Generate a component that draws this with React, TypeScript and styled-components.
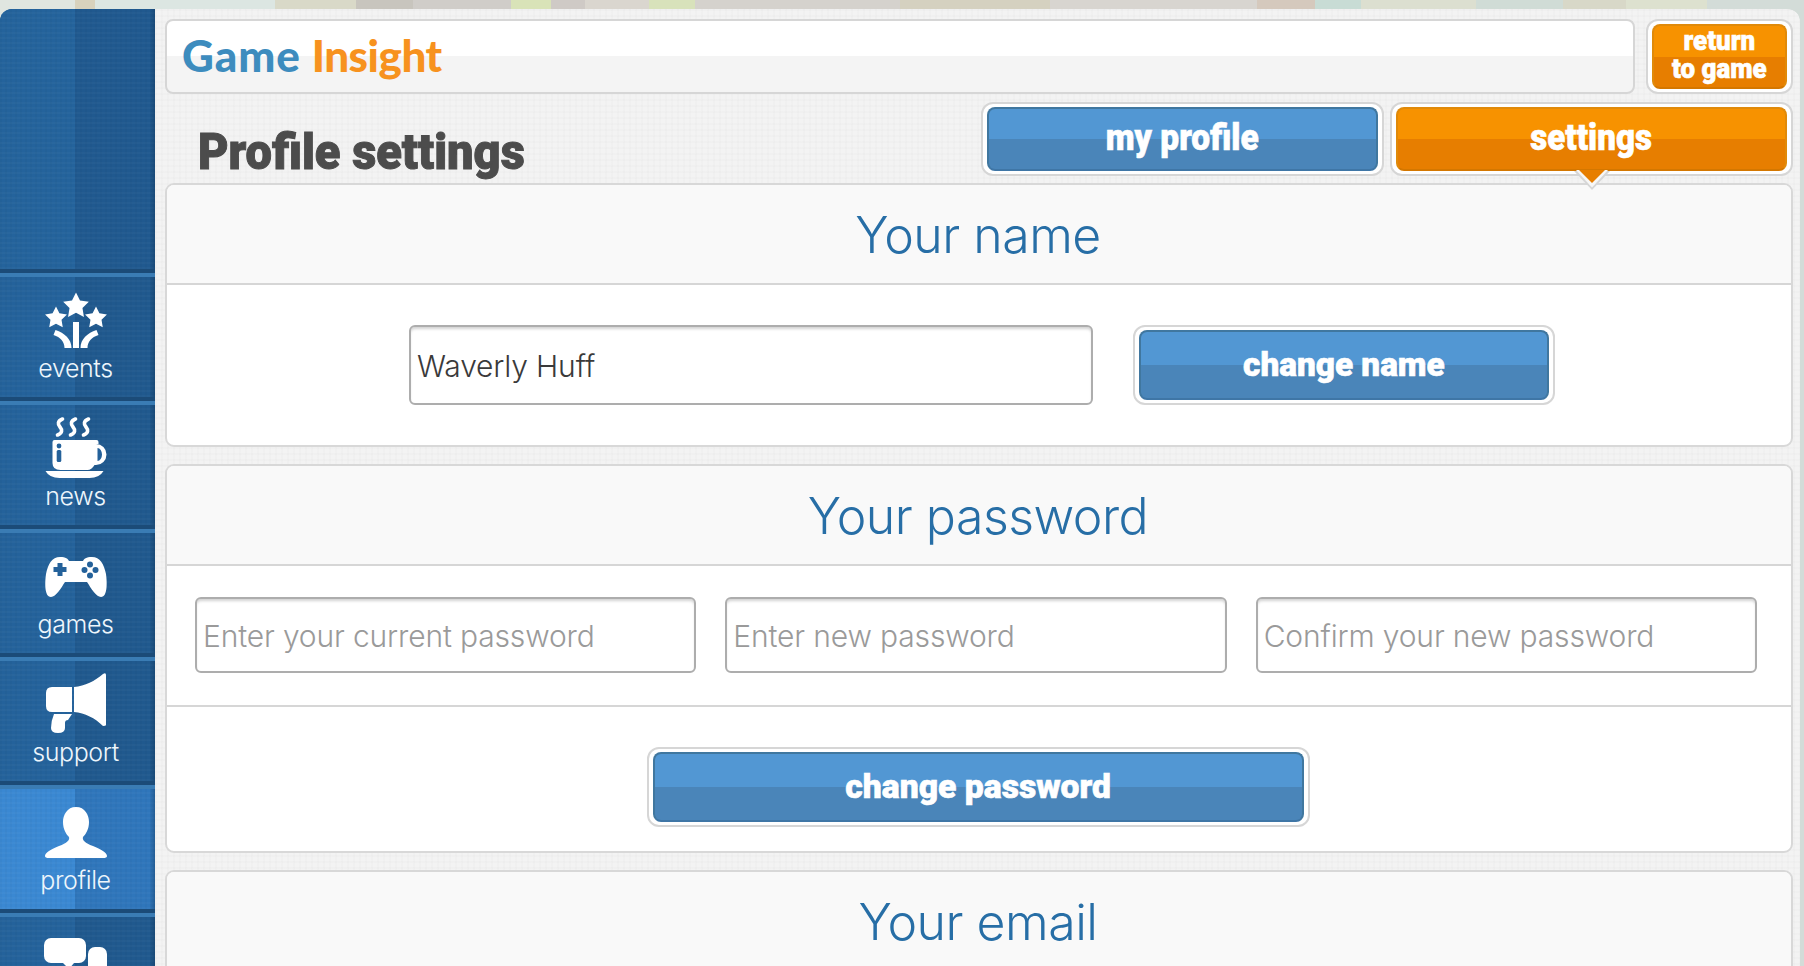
import React from "react";
import styled, { createGlobalStyle } from "styled-components";

const Global = createGlobalStyle`
  html, body { margin: 0; padding: 0; height: 100%; overflow: hidden; }
  * { box-sizing: border-box; }
`;

const light = `Inter, "Liberation Sans", sans-serif`;
const heavy = `Roboto, "Liberation Sans", sans-serif`;

const Page = styled.div`
  width: 1804px;
  height: 966px;
  overflow: hidden;
  padding: 9px 4px 0 0;
  background: linear-gradient(90deg,
    #e0e6e0 0 75px, #d8d2bd 75px 95px, #dce6e2 95px 275px, #d9d9c8 275px 356px,
    #c8c5be 356px 413px, #d0cdc9 413px 511px, #d9e3b8 511px 551px, #cfcac6 551px 585px,
    #dad6cf 585px 649px, #d8e2bb 649px 695px, #d5d2cd 695px 900px,
    #d5d1c0 900px 1050px, #d8d5d0 1050px 1257px, #d5c9bd 1257px 1315px, #c8dcd5 1315px 1361px,
    #dcdfd0 1361px 1476px, #d0dcd6 1476px 1563px, #d8d8c8 1563px 1626px, #dde1cf 1626px 1707px,
    #d3dcd8 1707px 100%);
`;

const Shell = styled.div`
  display: flex;
  height: 1100px;
  border-radius: 12px 12px 0 0;
  overflow: hidden;
`;

const Sidebar = styled.nav`
  flex: 0 0 155px;
  display: flex;
  flex-direction: column;
`;

const tile = (a: string, b: string) => `
  background-color: ${a};
  background-image:
    linear-gradient(90deg, transparent 96.5%, rgba(10, 40, 70, .35) 100%),
    repeating-linear-gradient(0deg, rgba(255,255,255,.025) 0 2px, transparent 2px 5px),
    repeating-linear-gradient(90deg, rgba(0,0,0,.025) 0 2px, transparent 2px 5px),
    linear-gradient(90deg, ${a} 0 48.5%, ${b} 48.5% 100%);
`;

const SideTop = styled.div`
  height: 264px;
  flex: none;
  border-bottom: 4px solid #1b4b78;
  ${tile("#24639c", "#20598f")}
`;

const SideItem = styled.a<{ $active?: boolean }>`
  height: 128px;
  flex: none;
  display: flex;
  flex-direction: column;
  align-items: center;
  border-top: 4px solid #3a7cb4;
  border-bottom: 4px solid #1b4b78;
  color: #eef6fc;
  ${(p) => (p.$active ? tile("#3a88d2", "#2f76bb") : tile("#24629b", "#20598e"))}
`;

const IconSlot = styled.div<{ $h: number; $top: number }>`
  width: 62px;
  height: ${(p) => p.$h}px;
  margin-top: ${(p) => p.$top}px;
  margin-right: 4px;
  flex: none;
  svg { display: block; width: 100%; height: 100%; overflow: visible; }
`;

const SideLabel = styled.span`
  font: 300 25px/30px ${light};
  letter-spacing: -0.4px;
  margin-top: auto;
  margin-bottom: 14px;
  margin-right: 4px;
`;

const Main = styled.main`
  flex: 1;
  min-width: 0;
  padding: 10px 7px 0 10px;
  background-color: #f3f3f3;
  background-image:
    repeating-linear-gradient(0deg, rgba(0,0,0,.012) 0 2px, transparent 2px 6px),
    repeating-linear-gradient(90deg, rgba(0,0,0,.012) 0 2px, transparent 2px 6px);
  border-radius: 0 12px 0 0;
`;

const TopRow = styled.header`
  display: flex;
  gap: 11px;
  height: 75px;
`;

const LogoBar = styled.div`
  flex: 1;
  display: flex;
  align-items: center;
  padding-left: 15px;
  border: 2px solid #d6d6d6;
  border-radius: 8px;
  background: linear-gradient(180deg, #fff 0 49%, #f4f4f4 49% 100%);
`;

const Logo = styled.div`
  font: 900 44px/1 Lato, sans-serif;
  white-space: nowrap;
  display: flex;
  gap: 11px;
  margin-top: -3px;
`;

const LogoPart = styled.span<{ $c: string; $ls: number }>`
  color: ${(p) => p.$c};
  letter-spacing: ${(p) => p.$ls}px;
`;

const Ring = styled.div<{ $w?: string; $h: number }>`
  flex: ${(p) => p.$w ?? "none"};
  height: ${(p) => p.$h}px;
  padding: 3px 4px;
  background: #fff;
  border: 2px solid #d6d6d6;
  border-radius: 12px;
  position: relative;
`;

const Btn = styled.button<{ $tone: "blue" | "orange"; $size: number; $lh?: number }>`
  width: 100%;
  height: 100%;
  display: flex;
  flex-direction: column;
  align-items: center;
  justify-content: center;
  padding: 0 0 3px;
  cursor: pointer;
  border-radius: 8px;
  border: 2px solid ${(p) => (p.$tone === "blue" ? "#40779f" : "#e08a0a")};
  border-bottom-color: ${(p) => (p.$tone === "blue" ? "#3f76a6" : "#d47700")};
  background: ${(p) =>
    p.$tone === "blue"
      ? "linear-gradient(180deg, #5297d3 0 50%, #4a85b9 50% 100%)"
      : "linear-gradient(180deg, #f79200 0 50%, #e77e00 50% 100%)"};
  color: #fff;
  font: 900 ${(p) => p.$size}px/${(p) => p.$lh ?? p.$size}px ${heavy};
  -webkit-text-stroke: 0.6px #fff;
`;

const Squeezed = styled.span<{ $x: number }>`
  display: block;
  white-space: nowrap;
  text-align: center;
  transform: scaleX(${(p) => p.$x});
`;

const TabRow = styled.div`
  display: flex;
  align-items: center;
  height: 74px;
  margin-top: 8px;
`;

const PageTitle = styled.h1`
  flex: 1;
  margin: 0 0 0 33px;
  padding-top: 25px;
  color: #4c4c4c;
  font: 900 50px/1 ${heavy};
  -webkit-text-stroke: 1px #4c4c4c;
`;

const TitleText = styled.span`
  display: inline-block;
  transform: scaleX(0.94);
  transform-origin: left center;
  white-space: nowrap;
`;

const Tabs = styled.div`
  display: flex;
  gap: 6px;
`;

const PointerMark = styled.svg`
  position: absolute;
  left: 50%;
  bottom: -16px;
  margin-left: -18px;
  width: 36px;
  height: 20px;
  z-index: 2;
`;

const Card = styled.section`
  border: 2px solid #d8d8d8;
  border-radius: 9px;
  background: #fff;
  margin-top: 7px;
  & + & { margin-top: 17px; }
`;

const CardHead = styled.h2`
  margin: 0;
  height: 100px;
  display: flex;
  align-items: center;
  justify-content: center;
  background: #f9f9f9;
  border-radius: 7px 7px 0 0;
  border-bottom: 2px solid #d6d6d6;
  color: #276ea6;
  font: 300 50px/1 ${light};
  letter-spacing: -0.5px;
  padding: 1px 2px 0 0;
`;

const NameRow = styled.div`
  display: flex;
  align-items: center;
  padding: 40px 0 40px 242px;
  gap: 40px;
`;

const Field = styled.input<{ $w?: number; $h: number }>`
  ${(p) => (p.$w ? `flex: 0 0 ${p.$w}px;` : "flex: 1; min-width: 0;")}
  height: ${(p) => p.$h}px;
  padding: 2px 7px 0 6px;
  border: 2px solid #adadad;
  border-radius: 6px;
  background: #fff;
  box-shadow: inset 0 3px 3px -1px rgba(0, 0, 0, 0.18);
  color: #3a3a3a;
  font: 300 30px/1 ${light};
  letter-spacing: -0.15px;
  outline: none;
  &::placeholder { color: #9a9a9a; opacity: 1; }
`;

const PassRow = styled.div`
  display: flex;
  gap: 29px;
  padding: 31px 34px 32px 28px;
  border-bottom: 2px solid #d6d6d6;
`;

const ButtonRow = styled.div`
  display: flex;
  justify-content: center;
  padding: 40px 2px 24px 0;
`;

const starPoints = (cx: number, cy: number, R: number, r: number) =>
  Array.from({ length: 10 }, (_, i) => {
    const a = (-90 + i * 36) * (Math.PI / 180);
    const d = i % 2 ? r : R;
    return `${(cx + d * Math.cos(a)).toFixed(2)},${(cy + d * Math.sin(a)).toFixed(2)}`;
  }).join(" ");

const Stars = () => (
  <svg viewBox="0 0 61 55" fill="#fff">
    <polygon points={starPoints(30.5, 13, 13.5, 6.8)} />
    <polygon points={starPoints(10.5, 25, 11.5, 5.8)} />
    <polygon points={starPoints(50.5, 25, 11.5, 5.8)} />
    <rect x="27.500" y="29" width="6" height="26" />
    <path d="M10 37C19 40 26 46 26 55h-7C19 49 15 44 8 42z" />
    <path d="M51 37C42 40 35 46 35 55h7C42 49 46 44 53 42z" />
  </svg>
);

const Cup = () => (
  <svg viewBox="0 0 61 61" fill="#fff">
    <g fill="none" stroke="#fff" strokeWidth="3.600" strokeLinecap="round">
      <path d="M17 2c-5 2-5 5-2.500 8s2.500 6-2.500 8" />
      <path d="M30 2c-5 2-5 5-2.500 8s2.500 6-2.500 8" />
      <path d="M43 2c-5 2-5 5-2.500 8s2.500 6-2.500 8" />
    </g>
    <path d="M9 23h42q2 0 2 2v2h-2.500a10.500 10.500 0 0 1 0 21H49q-3 5-7 5H15Q7 53 7 46V25q0-2 2-2z" />
    <path d="M52 31a4.500 6.500 0 0 1 0 13z" fill="#24619a" />
    <circle cx="13.500" cy="29" r="2.400" fill="#24619a" />
    <rect x="11.200" y="33" width="4.600" height="12" rx="1.500" fill="#24619a" />
    <path d="M0 54h58q-4 7-14 7H14Q4 61 0 54z" />
  </svg>
);

const Pad = () => (
  <svg viewBox="0 0 62 40" fill="#fff">
    <path d="M15 0c6 0 8 2 9 4h14c1-2 3-4 9-4 8 0 12 7 14 17 1 7 2 23-5 23-5 0-10-9-14-15H20C16 31 11 40 6 40-1 40 0 24 1 17 3 7 7 0 15 0z" />
    <path d="M12.500 6h5v4h4v5h-4v4h-5v-4h-4v-5h4z" fill="#24619a" />
    <g fill="#24619a">
      <circle cx="45" cy="7.500" r="3" />
      <circle cx="39.500" cy="13" r="3" />
      <circle cx="50.500" cy="13" r="3" />
      <circle cx="45" cy="18.500" r="3" />
    </g>
  </svg>
);

const Horn = () => (
  <svg viewBox="0 0 62 60" fill="#fff">
    <path d="M7 14h20v25H7q-6 0-6-6V20q0-6 6-6z" />
    <path d="M29 14C40 13 50 8 58 1q3-2 3 1v50q0 1-3 1C50 45 40 40 29 39z" />
    <path d="M9 41h18l-4 6q-3 0-3 3v5q0 5-7 5-7 0-7-5 0-7 3-14z" />
  </svg>
);

const Person = () => (
  <svg viewBox="0 0 62 51" fill="#fff">
    <path d="M31 0c9 0 13 8 13 15 0 7-3 12-6 15-1 3 2 6 10 9 8 3 14 7 14 10q0 2-4 2H4q-4 0-4-2c0-3 6-7 14-10 8-3 11-6 10-9-3-3-6-8-6-15C18 8 22 0 31 0z" />
  </svg>
);

const Chat = () => (
  <svg viewBox="0 0 62 60" fill="#fff">
    <rect x="43" y="9" width="19" height="40" rx="7" />
    <rect x="-1" y="0" width="42" height="25" rx="7" />
    <path d="M18 25h11l-5 6z" />
  </svg>
);

const items = [
  { label: "events", Icon: Stars, h: 55, top: 16 },
  { label: "news", Icon: Cup, h: 61, top: 12 },
  { label: "games", Icon: Pad, h: 40, top: 24 },
  { label: "support", Icon: Horn, h: 60, top: 12 },
  { label: "profile", Icon: Person, h: 51, top: 18, active: true },
  { label: "", Icon: Chat, h: 60, top: 21 },
];

export default function App() {
  return (
    <Page>
      <Global />
      <Shell>
        <Sidebar>
          <SideTop />
          {items.map(({ label, Icon, h, top, active }) => (
            <SideItem key={label || "chat"} $active={active}>
              <IconSlot $h={h} $top={top}>
                <Icon />
              </IconSlot>
              <SideLabel>{label}</SideLabel>
            </SideItem>
          ))}
        </Sidebar>
        <Main>
          <TopRow>
            <LogoBar>
              <Logo>
                <LogoPart $c="#3d8cbe" $ls={0.9}>Game</LogoPart>
                <LogoPart $c="#f7921e" $ls={-0.5}>Insight</LogoPart>
              </Logo>
            </LogoBar>
            <Ring $h={75} $w="0 0 147px">
              <Btn $tone="orange" $size={27} $lh={28}>
                <Squeezed $x={0.96}>
                  return
                  <br />
                  to game
                </Squeezed>
              </Btn>
            </Ring>
          </TopRow>
          <TabRow>
            <PageTitle>
              <TitleText>Profile settings</TitleText>
            </PageTitle>
            <Tabs>
              <Ring $h={74} $w="0 0 403px">
                <Btn $tone="blue" $size={36}>
                  <Squeezed $x={0.93}>my profile</Squeezed>
                </Btn>
              </Ring>
              <Ring $h={74} $w="0 0 403px">
                <Btn $tone="orange" $size={36}>
                  <Squeezed $x={0.92}>settings</Squeezed>
                </Btn>
                <PointerMark viewBox="0 0 36 20">
                  <polygon points="0,1 18,20 36,1" fill="#d6d6d6" />
                  <polygon points="2,0 18,17.500 34,0" fill="#f7f7f7" />
                  <polygon points="5,0 18,13 31,0" fill="#e77e00" />
                </PointerMark>
              </Ring>
            </Tabs>
          </TabRow>
          <Card>
            <CardHead>Your name</CardHead>
            <NameRow>
              <Field $w={684} $h={80} readOnly value="Waverly Huff" />
              <Ring $h={80} $w="0 0 422px">
                <Btn $tone="blue" $size={34}>
                  <Squeezed $x={0.98}>change name</Squeezed>
                </Btn>
              </Ring>
            </NameRow>
          </Card>
          <Card>
            <CardHead>Your password</CardHead>
            <PassRow>
              <Field $h={76} placeholder="Enter your current password" />
              <Field $h={76} placeholder="Enter new password" />
              <Field $h={76} placeholder="Confirm your new password" />
            </PassRow>
            <ButtonRow>
              <Ring $h={80} $w="0 0 663px">
                <Btn $tone="blue" $size={34}>
                  <Squeezed $x={0.99}>change password</Squeezed>
                </Btn>
              </Ring>
            </ButtonRow>
          </Card>
          <Card>
            <CardHead>Your email</CardHead>
          </Card>
        </Main>
      </Shell>
    </Page>
  );
}
